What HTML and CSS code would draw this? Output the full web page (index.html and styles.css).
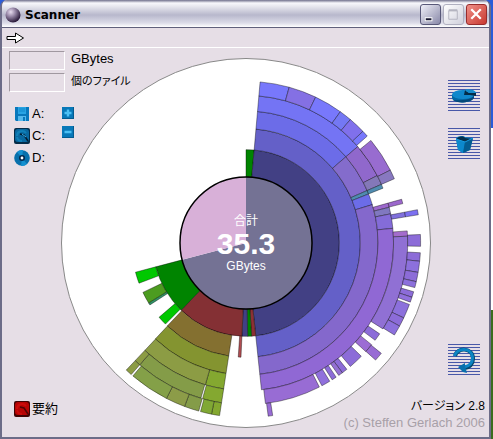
FILE: index.html
```html
<!DOCTYPE html>
<html lang="ja">
<head>
    <meta charset="utf-8">
    <meta name="viewport" content="width=device-width, initial-scale=1.0">
    <title>Scanner</title>
    <link rel="stylesheet" href="styles.css">
</head>
<body>
    <div class="window">
        <header class="titlebar">
            <svg class="app-icon" viewBox="0 0 16 16">
                <defs>
                    <radialGradient id="ball" cx="35%" cy="30%" r="70%">
                        <stop offset="0" stop-color="#e8dcf0"/>
                        <stop offset="0.45" stop-color="#9484a4"/>
                        <stop offset="1" stop-color="#2c1c3c"/>
                    </radialGradient>
                </defs>
                <circle cx="8" cy="8" r="7.5" fill="url(#ball)"/>
            </svg>
            <h1>Scanner</h1>
            <div class="win-buttons">
                <button class="win-btn" aria-label="Minimize"><svg viewBox="0 0 20 20"><path d="M4 13h8v4H4z" fill="#fff"/><path d="M5 14h6v2H5z" fill="#181830"/></svg></button>
                <button class="win-btn disabled" aria-label="Maximize" disabled><svg viewBox="0 0 20 20"><path d="M5 6h9v9H5z" fill="none" stroke="#b4b4c0"/><path d="M5 5.5h9" stroke="#b4b4c0" stroke-width="2"/></svg></button>
                <button class="win-btn close" aria-label="Close"><svg viewBox="0 0 20 20"><path d="M4.500 4.500l10 10M14.500 4.500l-10 10" stroke="#fff" stroke-width="2.400"/></svg></button>
            </div>
        </header>
        <nav class="toolbar">
            <button class="icon-btn" aria-label="Go"><svg class="arrow" viewBox="0 0 20 12"><path d="M1 4.500h8.500V1l8 5-8 5V7.500H1z" fill="#fff" stroke="#000"/></svg></button>
        </nav>
        <main class="stage">
            <svg class="chart" id="chart" viewBox="0 0 372 372">
                <circle class="chart-bg" cx="186" cy="186" r="184.500"/>
                <g id="sectors"></g>
                <circle class="hub" cx="186" cy="186" r="66"/>
                <text class="hub-text" x="186" y="168">合計</text>
                <text class="hub-total" x="186" y="197">35.3</text>
                <text class="hub-text" x="186" y="213">GBytes</text>
            </svg>
            <div class="side left">
                <div class="fields">
                    <input type="text" id="size" readonly><label for="size">GBytes</label>
                    <input type="text" id="files" readonly><label class="kana" for="files">個のファイル</label>
                </div>
                <div class="drives">
                    <div class="drive-list">
                        <button class="icon-btn">
                            <svg class="drive-icon" viewBox="0 0 16 16"><path d="M1 1h14v14H2l-1-1z" fill="#0878bc"/><path d="M4 1h8v7H4z" fill="#28a4e4"/><path d="M4 10h8v5H4z" fill="#54b8ec"/><path d="M9 11h2v4H9z" fill="#0878bc"/><path d="M5 3h6M5 5h6" stroke="#1088cc"/></svg>
                            A:
                        </button>
                        <button class="icon-btn">
                            <svg class="drive-icon" viewBox="0 0 16 16"><rect width="16" height="16" rx="2" fill="#042c48"/><rect x="1" y="1" width="14" height="13" rx="3" fill="#0868a0"/><path d="M3 8a5 5 0 0 1 9-3M3 9a5 5 0 0 0 5 4" fill="none" stroke="#1080b8" stroke-width="2"/><path d="M6 6l4 1 4 6" fill="none" stroke="#031c30" stroke-width="1.500"/><path d="M8 6l4 3" stroke="#38b0ec"/></svg>
                            C:
                        </button>
                        <button class="icon-btn">
                            <svg class="drive-icon" viewBox="0 0 16 16"><circle cx="8" cy="8" r="7.800" fill="#0870ac"/><path d="M8 8L3 2a8 8 0 0 1 6-2zM8 8l5 6a8 8 0 0 1-6 2z" fill="#1490d0"/><circle cx="8" cy="8" r="3" fill="#04284c"/><circle cx="8" cy="8" r="1.400" fill="#fff"/></svg>
                            D:
                        </button>
                    </div>
                    <div class="zoom-list">
                        <button class="icon-btn" aria-label="Zoom in"><svg class="zoom-icon" viewBox="0 0 12 12"><path d="M0 0h12v12H0z" fill="#045c90"/><path d="M0 0h11v11H0z" fill="#0878b8"/><path d="M6 2.500v7M2.500 6h7" stroke="#4cc0f4" stroke-width="2.400"/></svg></button>
                        <button class="icon-btn" aria-label="Zoom out"><svg class="zoom-icon" viewBox="0 0 12 12"><path d="M0 0h12v12H0z" fill="#045c90"/><path d="M0 0h11v11H0z" fill="#0878b8"/><path d="M2.500 6h7" stroke="#4cc0f4" stroke-width="2.400"/></svg></button>
                    </div>
                </div>
                <button class="icon-btn summary">
                    <svg class="drive-icon" viewBox="0 0 16 16"><rect width="16" height="16" rx="2" fill="#400404"/><rect x="1" y="1" width="14" height="13" rx="3" fill="#b80404"/><path d="M3 8a5 5 0 0 1 9-3M3 9a5 5 0 0 0 5 4" fill="none" stroke="#cc0c0c" stroke-width="2"/><path d="M6 6l4 1 4 6" fill="none" stroke="#500404" stroke-width="1.500"/></svg>
                    要約
                </button>
            </div>
            <div class="side right">
                <div class="tools">
                    <button class="tool" aria-label="Recycle drive">
                        <svg viewBox="0 0 32 32"><path d="M4 15v3c1 6 21 6 22-1v-4z" fill="#0468a4"/><path d="M5 20c4 4 18 3 21-2v-2c-3 4-15 5-21 4z" fill="#044878"/><ellipse cx="15" cy="14.500" rx="11" ry="4.500" fill="#1088cc"/><path d="M16 15l1-5 2 2 9 0v4l-6-1z" fill="#032c48"/><path d="M17 9.500c5-1 10 0 11.500 3.500l-8 0z" fill="#148ccc"/></svg>
                    </button>
                    <button class="tool" aria-label="Recycle bin">
                        <svg viewBox="0 0 32 32"><path d="M8 11c0-3 7-4 9-2l8 1-3 12-7 3-5-3z" fill="#0878b8"/><path d="M9 11c1-3 7-3 8-1l7 1-7 3z" fill="#04304c"/><path d="M8 11l9 3-2 11-5-3z" fill="#0c88cc"/><path d="M17 14l8-4-3 12-7 3z" fill="#045c90"/><path d="M8 11l9 3 8-4" fill="none" stroke="#1898dc"/></svg>
                    </button>
                </div>
                <div class="bottom">
                    <button class="tool" aria-label="Rescan">
                        <svg viewBox="0 0 32 32"><path d="M7 12c2-9 18-9 18 3 0 5-4 9-8 9" fill="none" stroke="#04486c" stroke-width="4"/><path d="M6.500 12c2-9 18-9 18 2 0 6-4 8-8 9" fill="none" stroke="#0c84c4" stroke-width="3"/><path d="M10 23l7-4v3l2 7-4-1z" fill="#0870ac"/></svg>
                    </button>
                    <p class="version">バージョン 2.8</p>
                    <p class="copyright">(c) Steffen Gerlach 2006</p>
                </div>
            </div>
        </main>
    </div>
    <script src="script.js"></script>
</body>
</html>
```
FILE: styles.css
```css
body {
    margin: 0;
    font-family: "Liberation Sans", "Noto Sans CJK JP", sans-serif;
    font-size: 13px;
    color: #000;
    background: linear-gradient(#2c5cd8 0 128px, #fff 128px 310px, #3c6c1c 310px);
}
.window {
    box-sizing: border-box;
    display: flex;
    flex-direction: column;
    min-height: 100vh;
    margin-right: 2px;
    border: 2px solid #6c6c88;
    border-top: 0;
    border-radius: 7px 7px 0 0;
    background: #e6dee6;
    overflow: hidden;
}
button {
    font: inherit;
    color: inherit;
    padding: 0;
    cursor: pointer;
}
svg {
    display: block;
}
.titlebar {
    display: flex;
    align-items: center;
    gap: 4px;
    height: 28px;
    padding: 2px 2px 0 3px;
    box-sizing: border-box;
    background: linear-gradient(#70708c 0, #f8f8fc 3px, #e4e4ec 7px, #b8b8cc 15px, #dcdce8 23px, #fff 27px);
    border-bottom: 1px solid #60607c;
}
.titlebar h1 {
    flex: 1;
    margin: 0;
    font-family: "DejaVu Sans", sans-serif;
    font-size: 12px;
    line-height: 16px;
}
.app-icon {
    width: 16px;
    height: 16px;
}
.win-buttons {
    display: flex;
    gap: 2px;
}
.win-btn {
    width: 21px;
    height: 21px;
    box-sizing: border-box;
    border: 1px solid #585878;
    border-radius: 3px;
    background: linear-gradient(135deg, #f0f0f8, #8888a8);
}
.win-btn.disabled {
    border-color: #b0b0c0;
    background: linear-gradient(135deg, #fff, #d0d0dc);
}
.win-btn.close {
    border-color: #982c2c;
    background: linear-gradient(135deg, #f09088, #c83830);
}
.toolbar {
    height: 20px;
    padding: 4px 4px 0;
    box-sizing: border-box;
    border-bottom: 1px solid #fff;
}
.arrow {
    width: 20px;
    height: 12px;
}
.icon-btn {
    display: flex;
    align-items: center;
    gap: 2px;
    border: 0;
    background: none;
    line-height: 16px;
}
/* chart and both side panels share the same row */
.stage {
    flex: 1;
    display: grid;
    grid-template-columns: 1fr 1fr;
    grid-template-rows: 1fr;
}
.chart {
    grid-area: 1 / 1 / 2 / 3;
    justify-self: center;
    width: 77%;
    max-width: 372px;
    margin-top: 9px;
}
.side {
    z-index: 1;
    display: flex;
    flex-direction: column;
    justify-content: space-between;
}
.left {
    grid-area: 1 / 1;
    align-items: flex-start;
    padding: 3px 0 20px 7px;
}
.right {
    grid-area: 1 / 2;
    align-items: flex-end;
    padding: 32px 4px 5px 0;
}
.fields {
    display: grid;
    grid-template-columns: 56px auto;
    gap: 3px 6px;
}
.fields input {
    width: 100%;
    height: 19px;
    box-sizing: border-box;
    border: 1px solid #fff;
    border-top-color: #a098a0;
    border-left-color: #a098a0;
    background: none;
}
.fields label, .version {
    line-height: 16px;
}
.kana, .version {
    font-size: 11px;
    font-feature-settings: "palt";
}
.drives {
    flex: 1;
    display: flex;
    gap: 17px;
    padding: 14px 5px;
}
.drive-list {
    display: flex;
    flex-direction: column;
    gap: 6px;
}
.zoom-list {
    display: flex;
    flex-direction: column;
    gap: 7px;
    padding-top: 1px;
}
.drive-icon {
    width: 16px;
    height: 16px;
}
.zoom-icon {
    width: 12px;
    height: 12px;
}
.summary {
    margin-left: 5px;
}
.tools {
    display: flex;
    flex-direction: column;
    gap: 16px;
}
.tool {
    display: block;
    width: 32px;
    height: 32px;
    border: 0;
    background: repeating-linear-gradient(#4858a8 0 1px, #e6dee6 1px 3px);
}
.bottom {
    display: flex;
    flex-direction: column;
    align-items: flex-end;
}
.bottom p {
    margin: 0;
}
.bottom .version {
    padding-top: 22px;
    font-size: 12px;
}
.copyright {
    line-height: 18px;
    color: #a8a0a8;
}
.bottom .tool, .tools {
    margin-right: 5px;
}
.chart-bg {
    fill: #fff;
    stroke: #888;
}
.hub {
    fill: none;
    stroke: #000;
    stroke-width: 1.500px;
}
.hub-text, .hub-total {
    fill: #fff;
    text-anchor: middle;
}
.hub-text {
    font-size: 12px;
}
.hub-total {
    font-size: 30px;
    font-weight: bold;
}
.sector {
    stroke: #000;
    stroke-opacity: 0.550;
    stroke-width: 0.700px;
}
.share {
    stroke: none;
}
```
FILE: script.js
```javascript
const CENTER = 186;
const HUB = 66;

// [level, start angle, end angle, colour], clockwise from the top
const sectors = [
    [1, 0, 5, "#008400"],
    [1, 5, 174, "#424084"],
    [1, 174, 176.6, "#8c3034"],
    [1, 176.6, 179, "#008400"],
    [1, 179, 182.5, "#424084"],
    [1, 182.5, 224, "#843034"],
    [1, 224, 255.2, "#008400"],

    [2, 5, 174, "#6460c8"],
    [2, 182.5, 183.9, "#b04c50"],
    [2, 188.7, 223.5, "#847030"],
    [2, 224.8, 229.5, "#00c800"],
    [2, 237.2, 238.4, "#309468"],
    [2, 238.4, 244.4, "#4c9c20"],
    [2, 249.4, 255.2, "#00c800"],

    [3, 5, 49.2, "#6c6ce8"],
    [3, 49.2, 66.6, "#846ccc"],
    [3, 66.6, 68.2, "#508cb0"],
    [3, 68.2, 73.1, "#6c6ce8"],
    [3, 73.1, 174, "#8468cc"],
    [3, 188.7, 223.4, "#849430"],

    [4, 5, 49.2, "#7474f4"],
    [4, 49.2, 62.8, "#9068cc"],
    [4, 62.8, 66.6, "#8478b8"],
    [4, 66.6, 68.2, "#508cb0"],
    [4, 74.3, 76, "#9c68cc"],
    [4, 76, 78.6, "#8078c0"],
    [4, 78.6, 84.3, "#846cd8"],
    [4, 84.3, 174, "#9068d4"],
    [4, 188.7, 196, "#84a830"],
    [4, 196, 223.3, "#8c9c44"],

    [5, 5, 15.5, "#7878fc"],
    [5, 15.5, 25.5, "#8470e4"],
    [5, 25.5, 35.7, "#7878fc"],
    [5, 35.7, 40.2, "#7478f4"],
    [5, 40.2, 46.3, "#8070ec"],
    [5, 46.3, 48.6, "#7878fc"],
    [5, 50.6, 63.2, "#986cd0"],
    [5, 63.2, 66.6, "#8878c0"],
    [5, 74.3, 75.9, "#9c68cc"],
    [5, 79, 80.7, "#8070dc"],
    [5, 85.7, 87.6, "#a46ccc"],
    [5, 87.6, 122.1, "#9070d4"],
    [5, 124.2, 127, "#8c6cd8"],
    [5, 129, 132.2, "#9c6cd4"],
    [5, 134.5, 139.8, "#8c6cd8"],
    [5, 141.4, 143.4, "#8c6cd8"],
    [5, 143.4, 145, "#9470d4"],
    [5, 146.1, 147.8, "#8c6cd8"],
    [5, 148.8, 152, "#9070dc"],
    [5, 153, 173.1, "#986cd4"],
    [5, 188.7, 195.6, "#84a830"],
    [5, 196.2, 221.1, "#849c48"],
    [5, 221.1, 223.3, "#8c9c44"],

    [6, 79, 80.7, "#7c70f0"],
    [6, 87.2, 91.1, "#8c6cd8"],
    [6, 93.2, 96, "#8c6cd8"],
    [6, 96, 99.7, "#8c70dc"],
    [6, 99.7, 102.8, "#8c6cd8"],
    [6, 102.8, 104.8, "#8c70dc"],
    [6, 106.2, 108.1, "#8c6cd8"],
    [6, 108.1, 109.8, "#9070dc"],
    [6, 110.6, 115.4, "#8c70dc"],
    [6, 115.4, 118.4, "#8c6cd8"],
    [6, 118.4, 121.8, "#8c70dc"],
    [6, 129.2, 132.1, "#986cd4"],
    [6, 171.2, 172.7, "#986cd4"],
    [6, 188.7, 191.4, "#84a830"],
    [6, 191.4, 195.1, "#80a834"],
    [6, 195.7, 200.6, "#849c48"],
    [6, 200.6, 207.1, "#8c9c48"],
    [6, 207.1, 220.4, "#84a048"],
    [6, 221.1, 223.3, "#8c9c44"]
];

// used and free space inside the hub
const shares = [
    [0, 255.2, "#747294"],
    [255.2, 360, "#d8b0d8"]
];

function point(radius, angle) {
    const a = angle * Math.PI / 180;
    return (CENTER + radius * Math.sin(a)).toFixed(2) + " " + (CENTER - radius * Math.cos(a)).toFixed(2);
}

// every level covers the same area, so radii grow with the square root
function ringPath(level, from, to) {
    const inner = HUB * Math.sqrt(level);
    const outer = HUB * Math.sqrt(level + 1);
    const large = to - from > 180 ? 1 : 0;
    return `M${point(inner, from)}L${point(outer, from)}A${outer} ${outer} 0 ${large} 1 ${point(outer, to)}L${point(inner, to)}A${inner} ${inner} 0 ${large} 0 ${point(inner, from)}Z`;
}

function addPath(d, color, className) {
    const path = document.createElementNS("http://www.w3.org/2000/svg", "path");
    path.setAttribute("d", d);
    path.setAttribute("fill", color);
    path.setAttribute("class", className);
    document.getElementById("sectors").appendChild(path);
}

sectors.forEach(([level, from, to, color]) => addPath(ringPath(level, from, to), color, "sector"));

shares.forEach(([from, to, color]) => {
    const large = to - from > 180 ? 1 : 0;
    addPath(`M${CENTER} ${CENTER}L${point(HUB, from)}A${HUB} ${HUB} 0 ${large} 1 ${point(HUB, to)}Z`, color, "share");
});
```
